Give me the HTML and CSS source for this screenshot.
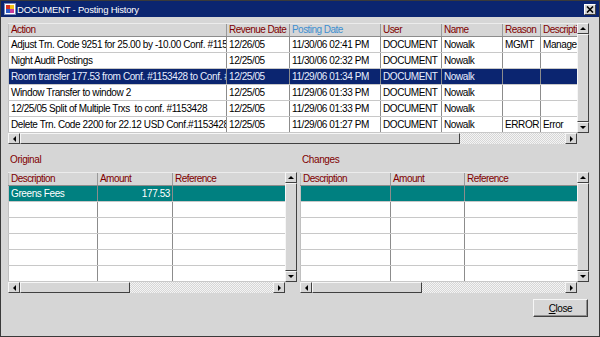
FILE: index.html
```html
<!DOCTYPE html>
<html lang="en">
<head>
  <meta charset="UTF-8">
  <title>DOCUMENT - Posting History</title>
  <link rel="stylesheet" href="styles.css">
</head>
<body>
  <div class="window">
    <div class="titlebar">
      <svg class="title-icon" width="12" height="12" viewBox="0 0 12 12">
        <rect x="0.5" y="0.5" width="11" height="11" fill="#fff" stroke="#7a8ab8"/>
        <rect x="2" y="2" width="4" height="4" fill="#d8301c"/>
        <rect x="6" y="2" width="4" height="4" fill="#f2c318"/>
        <rect x="2" y="6" width="4" height="4" fill="#2f5cc8"/>
        <rect x="6" y="6" width="4" height="4" fill="#c83c9c"/>
      </svg>
      <span class="title-text">DOCUMENT - Posting History</span>
      <div class="title-close">
        <svg width="8" height="7" viewBox="0 0 8 7"><path d="M1 0.5 L7 6.5 M7 0.5 L1 6.5" stroke="#000" stroke-width="1.6"/></svg>
      </div>
    </div>

    <div class="content">
      <div class="grid">
        <div class="grid-view">
          <div class="row head cols-history">
            <div class="cell">Action</div>
            <div class="cell">Revenue Date</div>
            <div class="cell sorted">Posting Date</div>
            <div class="cell">User</div>
            <div class="cell">Name</div>
            <div class="cell">Reason</div>
            <div class="cell">Description</div>
          </div>
          <div class="row cols-history">
            <div class="cell">Adjust Trn. Code 9251 for 25.00 by -10.00 Conf. #1153428</div>
            <div class="cell">12/26/05</div>
            <div class="cell">11/30/06 02:41 PM</div>
            <div class="cell">DOCUMENT</div>
            <div class="cell">Nowalk</div>
            <div class="cell">MGMT</div>
            <div class="cell">Management</div>
          </div>
          <div class="row cols-history">
            <div class="cell">Night Audit Postings</div>
            <div class="cell">12/25/05</div>
            <div class="cell">11/30/06 02:32 PM</div>
            <div class="cell">DOCUMENT</div>
            <div class="cell">Nowalk</div>
            <div class="cell"></div>
            <div class="cell"></div>
          </div>
          <div class="row selected cols-history">
            <div class="cell">Room transfer 177.53 from Conf. #1153428 to Conf. #1153430</div>
            <div class="cell">12/25/05</div>
            <div class="cell">11/29/06 01:34 PM</div>
            <div class="cell">DOCUMENT</div>
            <div class="cell">Nowalk</div>
            <div class="cell"></div>
            <div class="cell"></div>
          </div>
          <div class="row cols-history">
            <div class="cell">Window Transfer to window 2</div>
            <div class="cell">12/25/05</div>
            <div class="cell">11/29/06 01:33 PM</div>
            <div class="cell">DOCUMENT</div>
            <div class="cell">Nowalk</div>
            <div class="cell"></div>
            <div class="cell"></div>
          </div>
          <div class="row cols-history">
            <div class="cell">12/25/05 Split of Multiple Trxs&nbsp; to conf. #1153428</div>
            <div class="cell">12/25/05</div>
            <div class="cell">11/29/06 01:33 PM</div>
            <div class="cell">DOCUMENT</div>
            <div class="cell">Nowalk</div>
            <div class="cell"></div>
            <div class="cell"></div>
          </div>
          <div class="row cols-history">
            <div class="cell">Delete Trn. Code 2200 for 22.12 USD Conf.#1153428</div>
            <div class="cell">12/25/05</div>
            <div class="cell">11/29/06 01:27 PM</div>
            <div class="cell">DOCUMENT</div>
            <div class="cell">Nowalk</div>
            <div class="cell">ERROR</div>
            <div class="cell">Error</div>
          </div>
        </div>
        <div class="vscroll">
          <div class="sb-btn"><span class="arr-up"></span></div>
          <div class="sb-thumb"></div>
          <div class="sb-btn"><span class="arr-down"></span></div>
        </div>
        <div class="hscroll">
          <div class="sb-btn"><span class="arr-left"></span></div>
          <div class="sb-thumb thumb-wide"></div>
          <div class="sb-track"></div>
          <div class="sb-btn"><span class="arr-right"></span></div>
        </div>
        <div class="corner"></div>
      </div>

      <div class="panes">
        <div class="pane">
          <div class="pane-label">Original</div>
          <div class="grid">
            <div class="grid-view">
              <div class="row head cols-original">
                <div class="cell">Description</div>
                <div class="cell">Amount</div>
                <div class="cell">Reference</div>
              </div>
              <div class="row current cols-original">
                <div class="cell">Greens Fees</div>
                <div class="cell num">177.53</div>
                <div class="cell"></div>
              </div>
              <div class="row cols-original"><div class="cell"></div><div class="cell"></div><div class="cell"></div></div>
              <div class="row cols-original"><div class="cell"></div><div class="cell"></div><div class="cell"></div></div>
              <div class="row cols-original"><div class="cell"></div><div class="cell"></div><div class="cell"></div></div>
              <div class="row cols-original"><div class="cell"></div><div class="cell"></div><div class="cell"></div></div>
              <div class="row cols-original"><div class="cell"></div><div class="cell"></div><div class="cell"></div></div>
            </div>
            <div class="vscroll">
              <div class="sb-btn"><span class="arr-up"></span></div>
              <div class="sb-thumb"></div>
              <div class="sb-btn"><span class="arr-down"></span></div>
            </div>
            <div class="hscroll">
              <div class="sb-btn"><span class="arr-left"></span></div>
              <div class="sb-thumb thumb-small"></div>
              <div class="sb-track"></div>
              <div class="sb-btn"><span class="arr-right"></span></div>
            </div>
            <div class="corner"></div>
          </div>
        </div>

        <div class="pane">
          <div class="pane-label">Changes</div>
          <div class="grid">
            <div class="grid-view">
              <div class="row head cols-changes">
                <div class="cell">Description</div>
                <div class="cell">Amount</div>
                <div class="cell">Reference</div>
              </div>
              <div class="row current cols-changes">
                <div class="cell"></div>
                <div class="cell num"></div>
                <div class="cell"></div>
              </div>
              <div class="row cols-changes"><div class="cell"></div><div class="cell"></div><div class="cell"></div></div>
              <div class="row cols-changes"><div class="cell"></div><div class="cell"></div><div class="cell"></div></div>
              <div class="row cols-changes"><div class="cell"></div><div class="cell"></div><div class="cell"></div></div>
              <div class="row cols-changes"><div class="cell"></div><div class="cell"></div><div class="cell"></div></div>
              <div class="row cols-changes"><div class="cell"></div><div class="cell"></div><div class="cell"></div></div>
            </div>
            <div class="vscroll">
              <div class="sb-btn"><span class="arr-up"></span></div>
              <div class="sb-thumb"></div>
              <div class="sb-btn"><span class="arr-down"></span></div>
            </div>
            <div class="hscroll">
              <div class="sb-btn"><span class="arr-left"></span></div>
              <div class="sb-thumb thumb-small"></div>
              <div class="sb-track"></div>
              <div class="sb-btn"><span class="arr-right"></span></div>
            </div>
            <div class="corner"></div>
          </div>
        </div>
      </div>

      <div class="actions">
        <button class="btn"><u>C</u>lose</button>
      </div>
    </div>
  </div>
</body>
</html>
```

FILE: styles.css
```css
* { margin: 0; padding: 0; box-sizing: border-box; }

html,
body { width: 100%; height: 100%; }

body {
  font-family: "Liberation Sans", Arial, sans-serif;
  font-size: 10px;
  letter-spacing: -0.4px;
  background: #d6d6d6;
  color: #000;
}

.window {
  width: 600px;
  height: 337px;
  border: 1px solid #3a3a3a;
  background: #d6d6d6;
  display: flex;
  flex-direction: column;
}

/* title bar */
.titlebar {
  height: 16px;
  background: #0b2570;
  color: #fff;
  display: flex;
  align-items: center;
  gap: 1px;
  padding: 0 3px;
  font-size: 9.5px;
  letter-spacing: -0.2px;
}
.title-icon { display: block; }
.title-close {
  margin-left: auto;
  width: 12px;
  height: 11px;
  background: #d6d6d6;
  border: 1px solid;
  border-color: #fff #404040 #404040 #fff;
  display: flex;
  align-items: center;
  justify-content: center;
}
.title-close svg { display: block; }

.content {
  flex: 1;
  padding: 6px 10px 0 7px;
}

/* grids */
.grid {
  display: grid;
  grid-template-columns: 1fr 12px;
  grid-template-rows: 110px 11px;
}
.grid-view {
  background: #fff;
  overflow: hidden;
}
.row {
  display: grid;
  height: 16px;
  border-bottom: 1px solid #c8c8c8;
}
.cols-history { grid-template-columns: 219px 63px 91px 61px 61px 38px 36px; }
.cols-original { grid-template-columns: 90px 75px 112px; }
.cols-changes { grid-template-columns: 91px 74px 112px; }

.cell {
  border-right: 1px solid #8c8c8c;
  padding: 0 2px;
  line-height: 15px;
  white-space: nowrap;
  overflow: hidden;
}
.cell:first-child { border-left: 1px solid #c0c0c0; }
.cell:last-child { border-right: 0; }
.cell.num { text-align: right; }

.row.head {
  height: 14px;
  background: #d6d6d6;
  border-top: 1px solid #ececec;
  border-bottom: 1px solid #8c8c8c;
}
.row.head .cell {
  line-height: 12px;
  letter-spacing: -0.55px;
  color: #800000;
  border-right-color: #9a9a9a;
}
.row.head .cell.sorted { color: #3d8fd0; }

.row.selected { background: #0b2570; color: #e8eeff; }
.row.current { background: #008080; color: #fff; }

/* scrollbars */
.vscroll {
  display: flex;
  flex-direction: column;
}
.hscroll { display: flex; }
.corner { background: #d6d6d6; }

.sb-btn {
  width: 12px;
  height: 11px;
  flex: none;
  background: #d6d6d6;
  border: 1px solid;
  border-color: #f6f6f6 #404040 #404040 #f6f6f6;
  display: flex;
  align-items: center;
  justify-content: center;
}
.sb-thumb {
  flex: 1;
  background: #d6d6d6;
  border: 1px solid;
  border-color: #f6f6f6 #404040 #404040 #f6f6f6;
}
.hscroll .sb-thumb { flex: none; }
.thumb-wide { width: 440px; }
.thumb-small { width: 110px; }
.sb-track {
  flex: 1;
  background: repeating-conic-gradient(#d6d6d6 0 25%, #f4f4f4 0 50%) 0 0 / 2px 2px;
}

.arr-up,
.arr-down,
.arr-left,
.arr-right { width: 0; height: 0; display: block; }
.arr-up { border-left: 3px solid transparent; border-right: 3px solid transparent; border-bottom: 3px solid #000; }
.arr-down { border-left: 3px solid transparent; border-right: 3px solid transparent; border-top: 3px solid #000; }
.arr-left { border-top: 3px solid transparent; border-bottom: 3px solid transparent; border-right: 3px solid #000; }
.arr-right { border-top: 3px solid transparent; border-bottom: 3px solid transparent; border-left: 3px solid #000; }

/* lower panes */
.panes {
  display: flex;
  gap: 3px;
  margin-top: 10px;
}
.pane { width: 289px; }
.pane-label {
  color: #800000;
  line-height: 12px;
  padding-left: 2px;
  margin-bottom: 6px;
}

.actions {
  display: flex;
  justify-content: flex-end;
  margin-top: 6px;
  padding-right: 1px;
}
.btn {
  width: 55px;
  height: 18px;
  font: inherit;
  letter-spacing: inherit;
  background: #d6d6d6;
  border: 1px solid;
  border-color: #f6f6f6 #404040 #404040 #f6f6f6;
  box-shadow: inset -1px -1px #909090;
}
```
